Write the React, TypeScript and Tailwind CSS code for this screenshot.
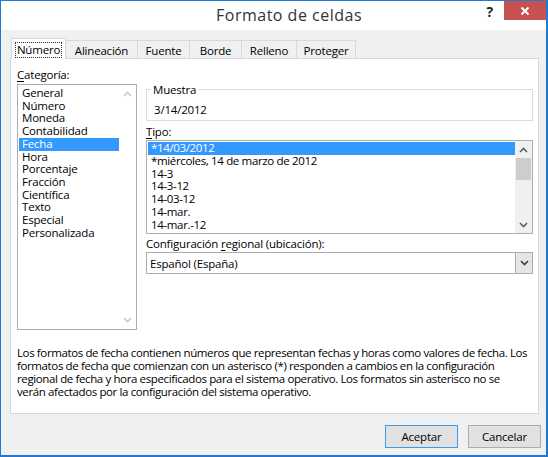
import React from "react";

const font = { fontFamily: '"Open Sans", "Noto Sans", sans-serif' };

function Chevron({ up, color = "#606060" }: { up?: boolean; color?: string }) {
  return (
    <svg width="9" height="6" viewBox="0 0 9 6">
      {up ? (
        <path d="M1 5 L4.5 1.5 L8 5" fill="none" stroke={color} strokeWidth="1.6" />
      ) : (
        <path d="M1 1 L4.5 4.5 L8 1" fill="none" stroke={color} strokeWidth="1.6" />
      )}
    </svg>
  );
}

const categories = [
  "General",
  "Número",
  "Moneda",
  "Contabilidad",
  "Fecha",
  "Hora",
  "Porcentaje",
  "Fracción",
  "Científica",
  "Texto",
  "Especial",
  "Personalizada",
];

const tipos = [
  "*14/03/2012",
  "*miércoles, 14 de marzo de 2012",
  "14-3",
  "14-3-12",
  "14-03-12",
  "14-mar.",
  "14-mar.-12",
];

const tabs = [
  { label: "Alineación", w: "w-[73px]" },
  { label: "Fuente", w: "w-[53px]" },
  { label: "Borde", w: "w-[53px]" },
  { label: "Relleno", w: "w-[56px]" },
  { label: "Proteger", w: "w-[60px]" },
];

export default function App() {
  return (
    <div
      className="w-[548px] h-[457px] bg-[#f0f0f0] border-l border-t border-r-2 border-b-2 border-[#1e7bd3] flex flex-col text-[11.5px] text-black tracking-[-0.2px]"
      style={font}
    >
      {/* Title bar */}
      <div className="h-[29px] bg-white flex items-start shrink-0">
        <div className="ml-[215px] mt-[4px] text-[16px] leading-[20px] text-[#333] tracking-[0.5px]">
          Formato de celdas
        </div>
        <div className="ml-auto mt-[3px] mr-[11px] text-[14px] font-bold leading-[16px] text-[#222]">?</div>
        <div className="w-[42px] h-[19px] bg-[#c75050] flex items-center justify-center">
          <svg width="10" height="10" viewBox="0 0 10 10">
            <path d="M1.5 1.5 L8.5 8.5 M8.5 1.5 L1.5 8.5" stroke="white" strokeWidth="2" />
          </svg>
        </div>
      </div>

      {/* Tabs */}
      <div className="flex items-end ml-[10px] mt-[8px] h-[21px] relative z-10 -mb-px">
        <div className="w-[55px] h-[21px] bg-white border border-b-0 border-[#d9d9d9] flex items-center justify-center pt-[1px]">
          <span className="border border-dotted border-[#333] px-[1px] leading-[13px] pb-[1px]">Número</span>
        </div>
        {tabs.map((t) => (
          <div
            key={t.label}
            className={`${t.w} h-[19px] -ml-px border border-[#d9d9d9] bg-[#f0f0f0] flex items-center justify-center leading-[13px] pt-[1px]`}
          >
            {t.label}
          </div>
        ))}
      </div>

      {/* Panel */}
      <div className="ml-[9px] w-[529px] h-[356px] bg-white border border-[#d9d9d9] shrink-0 pl-[6px] pt-[9px] flex flex-col">
        <div className="flex items-start">
          {/* Left column */}
          <div className="w-[120px] flex flex-col">
            <div className="leading-[13px] h-[13px]">
              <span className="underline underline-offset-2">C</span>ategoría:
            </div>
            <div className="mt-[3px] h-[246px] border border-[#abadb3] flex">
              <div className="flex-1 flex flex-col pt-[2px] pl-[1px]">
                {categories.map((c) => (
                  <div
                    key={c}
                    className={`h-[12.73px] leading-[12.73px] pl-[3px] whitespace-nowrap ${
                      c === "Fecha" ? "bg-[#3399ff] text-white" : ""
                    }`}
                  >
                    {c}
                  </div>
                ))}
              </div>
              <div className="w-[17px] flex flex-col items-center justify-between py-[6px]">
                <Chevron up color="#c8c8c8" />
                <Chevron color="#c8c8c8" />
              </div>
            </div>
          </div>

          {/* Right column */}
          <div className="ml-[9px] w-[387px] flex flex-col mt-[15px]">
            <fieldset className="border border-[#dcdcdc] pl-[7px] pt-[7px] pb-[4px] m-0">
              <legend className="ml-[-3px] px-[2px] leading-[13px]">Muestra</legend>
              <div className="leading-[13px]">3/14/2012</div>
            </fieldset>

            <div className="mt-[4px] leading-[13px] h-[13px]">
              <span className="underline underline-offset-2">T</span>ipo:
            </div>
            <div className="mt-[2px] h-[94px] border border-[#abadb3] flex">
              <div className="flex-1 flex flex-col pt-[1px] pl-[1px] tracking-[-0.35px]">
                {tipos.map((t, i) => (
                  <div
                    key={t}
                    className={`h-[12.8px] leading-[12.8px] pl-[3px] whitespace-nowrap ${
                      i === 0 ? "bg-[#3399ff] text-white" : ""
                    }`}
                  >
                    {t}
                  </div>
                ))}
              </div>
              <div className="w-[17px] bg-[#f0f0f0] flex flex-col items-center">
                <div className="h-[17px] flex items-center justify-center">
                  <Chevron up />
                </div>
                <div className="w-[15px] h-[22px] bg-[#cdcdcd]" />
                <div className="flex-1" />
                <div className="h-[17px] flex items-center justify-center">
                  <Chevron />
                </div>
              </div>
            </div>

            <div className="mt-[3px] leading-[13px] h-[13px]">
              Configuración <span className="underline underline-offset-2">r</span>egional (ubicación):
            </div>
            <div className="mt-[2px] h-[22px] border border-[#acacac] flex items-stretch">
              <div className="flex-1 bg-white pl-[3px] flex items-center leading-[13px]">Español (España)</div>
              <div className="w-[17px] bg-[#e5e5e5] border-l border-[#acacac] flex items-center justify-center">
                <Chevron color="#404040" />
              </div>
            </div>
          </div>
        </div>

        {/* Description */}
        <div className="mt-[16px] leading-[13px] whitespace-nowrap tracking-[-0.38px]">
          <div>Los formatos de fecha contienen números que representan fechas y horas como valores de fecha. Los</div>
          <div>formatos de fecha que comienzan con un asterisco (*) responden a cambios en la configuración</div>
          <div>regional de fecha y hora especificados para el sistema operativo. Los formatos sin asterisco no se</div>
          <div>verán afectados por la configuración del sistema operativo.</div>
        </div>
      </div>

      {/* Buttons */}
      <div className="flex justify-end gap-[10px] pr-[5px] mt-[11px]">
        <button className="w-[73px] h-[23px] bg-[#e1e1e1] border border-[#3c9be8] leading-[13px]">Aceptar</button>
        <button className="w-[73px] h-[23px] bg-[#e1e1e1] border border-[#adadad] leading-[13px]">Cancelar</button>
      </div>
    </div>
  );
}
